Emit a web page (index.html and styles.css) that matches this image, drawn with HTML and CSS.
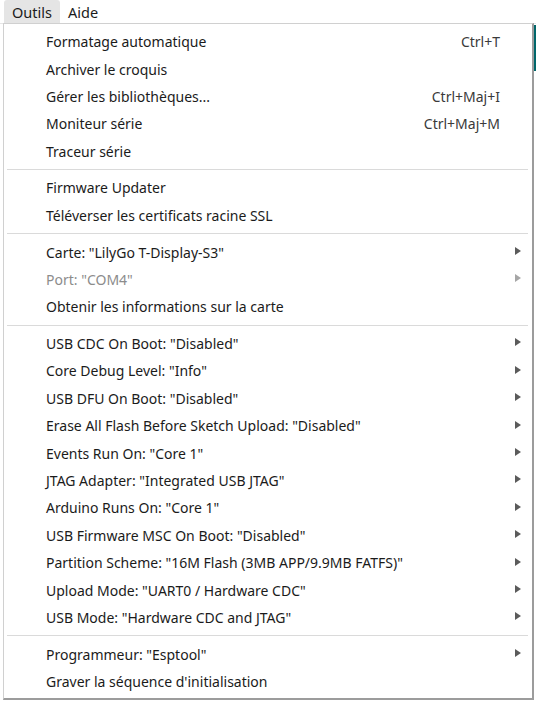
FILE: index.html
```html
<!DOCTYPE html>
<html lang="fr">
<head>
<meta charset="utf-8">
<title>Outils</title>
<link rel="stylesheet" href="styles.css">
</head>
<body>
<div class="app">
  <div class="menubar">
    <span class="mb-item active">Outils</span>
    <span class="mb-item">Aide</span>
  </div>
  <div class="backdrop">
    <div class="strip"></div>
  </div>
  <div class="dropdown">
    <div class="item"><span class="label">Formatage automatique</span><span class="key">Ctrl+T</span><span class="arrow"></span></div>
    <div class="item"><span class="label">Archiver le croquis</span><span class="key"></span><span class="arrow"></span></div>
    <div class="item"><span class="label">Gérer les bibliothèques...</span><span class="key">Ctrl+Maj+I</span><span class="arrow"></span></div>
    <div class="item"><span class="label">Moniteur série</span><span class="key">Ctrl+Maj+M</span><span class="arrow"></span></div>
    <div class="item"><span class="label">Traceur série</span><span class="key"></span><span class="arrow"></span></div>
    <div class="sep"></div>
    <div class="item"><span class="label">Firmware Updater</span><span class="key"></span><span class="arrow"></span></div>
    <div class="item"><span class="label">Téléverser les certificats racine SSL</span><span class="key"></span><span class="arrow"></span></div>
    <div class="sep"></div>
    <div class="item"><span class="label">Carte: "LilyGo T-Display-S3"</span><span class="key"></span><span class="arrow sub"></span></div>
    <div class="item disabled"><span class="label">Port: "COM4"</span><span class="key"></span><span class="arrow sub"></span></div>
    <div class="item"><span class="label">Obtenir les informations sur la carte</span><span class="key"></span><span class="arrow"></span></div>
    <div class="sep"></div>
    <div class="item"><span class="label">USB CDC On Boot: "Disabled"</span><span class="key"></span><span class="arrow sub"></span></div>
    <div class="item"><span class="label">Core Debug Level: "Info"</span><span class="key"></span><span class="arrow sub"></span></div>
    <div class="item"><span class="label">USB DFU On Boot: "Disabled"</span><span class="key"></span><span class="arrow sub"></span></div>
    <div class="item"><span class="label">Erase All Flash Before Sketch Upload: "Disabled"</span><span class="key"></span><span class="arrow sub"></span></div>
    <div class="item"><span class="label">Events Run On: "Core 1"</span><span class="key"></span><span class="arrow sub"></span></div>
    <div class="item"><span class="label">JTAG Adapter: "Integrated USB JTAG"</span><span class="key"></span><span class="arrow sub"></span></div>
    <div class="item"><span class="label">Arduino Runs On: "Core 1"</span><span class="key"></span><span class="arrow sub"></span></div>
    <div class="item"><span class="label">USB Firmware MSC On Boot: "Disabled"</span><span class="key"></span><span class="arrow sub"></span></div>
    <div class="item"><span class="label">Partition Scheme: "16M Flash (3MB APP/9.9MB FATFS)"</span><span class="key"></span><span class="arrow sub"></span></div>
    <div class="item"><span class="label">Upload Mode: "UART0 / Hardware CDC"</span><span class="key"></span><span class="arrow sub"></span></div>
    <div class="item"><span class="label">USB Mode: "Hardware CDC and JTAG"</span><span class="key"></span><span class="arrow sub"></span></div>
    <div class="sep"></div>
    <div class="item"><span class="label">Programmeur: "Esptool"</span><span class="key"></span><span class="arrow sub"></span></div>
    <div class="item"><span class="label">Graver la séquence d'initialisation</span><span class="key"></span><span class="arrow"></span></div>
  </div>
</div>
</body>
</html>
```

FILE: styles.css
```css
* { box-sizing: border-box; }
html, body {
  margin: 0;
  padding: 0;
  background: #ffffff;
}
body {
  font-family: "Noto Sans", "Open Sans", sans-serif;
  font-size: 14px;
  color: #1b1b1b;
  width: 536px;
  height: 701px;
  overflow: hidden;
}
.app {
  position: relative;
  width: 536px;
  height: 701px;
}
.menubar {
  height: 23px;
  display: flex;
  align-items: stretch;
  padding-left: 4px;
  background: #ffffff;
}
.mb-item {
  display: flex;
  align-items: center;
  padding: 0 8px;
  font-size: 14.5px;
  color: #1b1b1b;
}
.mb-item.active {
  background: #e5e5e5;
  border-radius: 3px 3px 0 0;
}
.backdrop {
  height: 678px;
  display: flex;
  justify-content: flex-end;
  border-top: 1px solid #e6e6e6;
}
.strip {
  width: 3px;
  height: 46px;
  margin-top: 1px;
  background: #00666a;
}
.dropdown {
  position: absolute;
  left: 3px;
  top: 23px;
  width: 531px;
  height: 677px;
  background: #ffffff;
  border: 1px solid #d0d0d0;
  border-right: 2px solid #9c9c9c;
  border-bottom: 2px solid #9c9c9c;
  padding: 4px 0 0 0;
  display: flex;
  flex-direction: column;
}
.item {
  height: 27.4px;
  flex-shrink: 0;
  display: flex;
  align-items: center;
  padding-left: 42px;
  white-space: nowrap;
}
.item .label { flex: 1; }
.item .key {
  color: #3a3a3a;
}
.item .arrow {
  width: 32px;
  height: 100%;
  position: relative;
}
.item .arrow.sub::after {
  content: "";
  position: absolute;
  left: 15px;
  top: 50%;
  margin-top: -5px;
  border-left: 6px solid #5b5b5b;
  border-top: 4.5px solid transparent;
  border-bottom: 4.5px solid transparent;
}
.item.disabled { color: #8c8c8c; }
.item.disabled .arrow.sub::after { border-left-color: #a6a6a6; }
.sep {
  height: 9.3px;
  flex-shrink: 0;
  display: flex;
  align-items: center;
  padding: 0 4px 0 3px;
}
.sep::before {
  content: "";
  flex: 1;
  height: 1px;
  background: #dadada;
}
```
